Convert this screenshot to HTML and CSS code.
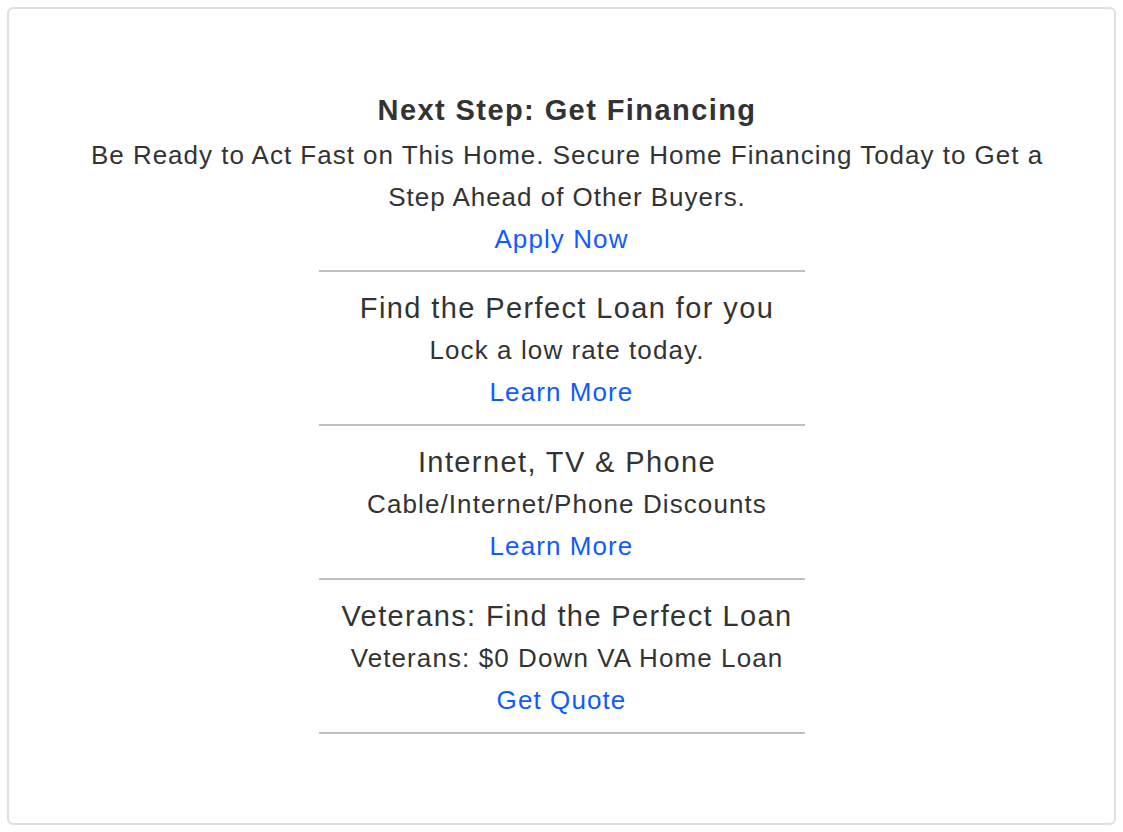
FILE: index.html
```html
<!DOCTYPE html>
<html lang="en">
<head>
    <meta charset="UTF-8">
    <meta name="viewport" content="width=device-width, initial-scale=1.0">
    <title>Get Financing</title>

    <link rel="stylesheet" href="styles.css">
</head>
<body>
    <div class="card">
        <div class="intro">
            <h3 class="intro-title">Next Step: Get Financing</h3>
            <p class="intro-text">Be Ready to Act Fast on This Home. Secure Home Financing Today to Get a Step Ahead of Other Buyers.</p>
            <a href="#" class="link">Apply Now</a>
        </div>
        <div class="offers">
            <div class="offer">
                <h4 class="offer-title">Find the Perfect Loan for you</h4>
                <p class="offer-text">Lock a low rate today.</p>
                <a href="#" class="link">Learn More</a>
            </div>
            <div class="offer">
                <h4 class="offer-title">Internet, TV &amp; Phone</h4>
                <p class="offer-text">Cable/Internet/Phone Discounts</p>
                <a href="#" class="link">Learn More</a>
            </div>
            <div class="offer">
                <h4 class="offer-title">Veterans: Find the Perfect Loan</h4>
                <p class="offer-text">Veterans: $0 Down VA Home Loan</p>
                <a href="#" class="link">Get Quote</a>
            </div>
        </div>
    </div>
</body>
</html>
```

FILE: styles.css
```css
* {
    padding: 0;
    margin: 0;
    box-sizing: border-box;
}

body {
    font-family: "Liberation Sans", Arial, sans-serif;
    background-color: #ffffff;
    color: #333333;
}

.card {
    margin: 7px;
    height: 818px;
    border: 2px solid #e0e0e0;
    border-radius: 6px;
    padding-top: 80px;
    text-align: center;
}

.intro {
    display: flex;
    flex-direction: column;
    align-items: center;
}

.intro-title {
    padding-left: 11px;
    font-size: 29px;
    font-weight: bold;
    line-height: 42px;
    letter-spacing: 0.049em;
    margin-bottom: 3px;
}

.intro-text {
    max-width: 990px;
    padding-left: 11px;
    font-size: 26px;
    line-height: 42px;
    letter-spacing: 0.038em;
}

.link {
    display: block;
    font-size: 26px;
    line-height: 42px;
    letter-spacing: 0.042em;
    color: #0f5bff;
    text-decoration: none;
}

.offers {
    width: 486px;
    margin: 10px auto 0;
    border-top: 2px solid #c0c0c0;
}

.offer {
    padding: 15px 0 11px;
    border-bottom: 2px solid #c0c0c0;
}

.offer-title,
.offer-text {
    padding-left: 11px;
    white-space: nowrap;
}

.offer-title {
    font-size: 29px;
    font-weight: normal;
    line-height: 42px;
    letter-spacing: 0.048em;
}

.offer-text {
    font-size: 26px;
    line-height: 42px;
    letter-spacing: 0.042em;
}
```
